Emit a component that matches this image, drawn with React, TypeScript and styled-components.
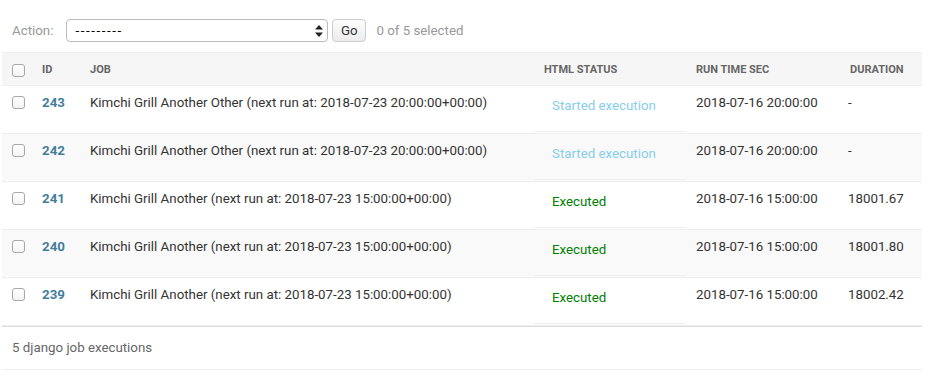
import React from "react";
import styled, { createGlobalStyle } from "styled-components";

const GlobalStyle = createGlobalStyle`
  html, body {
    margin: 0;
    padding: 0;
    background: #fff;
  }
  body {
    font-family: Roboto, "Liberation Sans", sans-serif;
    font-size: 13.3px;
    color: #333;
  }
`;

const ChangeList = styled.div`
  width: 920px;
  margin-left: 2px;
  padding-top: 8px;
`;

const Actions = styled.div`
  display: flex;
  align-items: center;
  height: 24px;
  padding: 10px;
  color: #999;
  font-size: 13.3px;
`;

const ActionLabel = styled.label`
  margin-right: 13px;
`;

const SelectWrap = styled.div`
  position: relative;
  width: 262px;
  height: 23px;
`;

const Select = styled.select`
  appearance: none;
  width: 100%;
  height: 100%;
  box-sizing: border-box;
  border: 1px solid #bbb;
  border-radius: 4px;
  background: #fff;
  padding: 0 24px 0 8px;
  font-family: Roboto, "Liberation Sans", sans-serif;
  font-size: 13.3px;
  letter-spacing: 1.6px;
  color: #000;
`;

const SelectArrows = styled.svg`
  position: absolute;
  right: 5px;
  top: 6px;
  pointer-events: none;
`;

const GoButton = styled.button`
  margin-left: 4px;
  width: 34px;
  height: 23px;
  border: 1px solid #ccc;
  border-radius: 4px;
  background: linear-gradient(#fdfdfd, #ececec);
  font-family: Roboto, "Liberation Sans", sans-serif;
  font-size: 13.3px;
  color: #333;
  padding: 0;
`;

const Counter = styled.span`
  margin-left: 10px;
  color: #999;
`;

const Table = styled.table`
  width: 920px;
  border-collapse: collapse;
  table-layout: fixed;
`;

const HeadCell = styled.th`
  background: #f6f6f6;
  border-top: 1px solid #eee;
  border-bottom: 1px solid #eee;
  padding: 9px 8px 7px;
  line-height: 16px;
  height: 16px;
  font-size: 11px;
  font-weight: 700;
  text-transform: uppercase;
  color: #666;
  text-align: left;
  vertical-align: middle;
  white-space: nowrap;
  &:first-child {
    padding-left: 10px;
  }
`;

const Row = styled.tr<{ $alt: boolean }>`
  background: ${(p) => (p.$alt ? "#f9f9f9" : "#fff")};
`;

const Cell = styled.td<{ $tight?: boolean }>`
  padding: 9px ${(p) => (p.$tight ? "10px" : "8px")} 7px
    ${(p) => (p.$tight ? "6px" : "8px")};
  line-height: 16px;
  font-size: 13.3px;
  color: #333;
  vertical-align: top;
  border-bottom: 1px solid #eee;
  white-space: nowrap;
  &:first-child {
    padding-left: 10px;
  }
`;

const StatusCell = styled.td`
  padding: 0;
  vertical-align: top;
  border-bottom: 1px solid #eee;
`;

const StatusBox = styled.div`
  margin: 0 2px 1px -2px;
  padding: 12px 8px 17px 18px;
  line-height: 16px;
  border-bottom: 1px solid #eee;
`;

const Status = styled.span<{ $done: boolean }>`
  color: ${(p) => (p.$done ? "#008000" : "#87ceeb")};
  font-size: 13.3px;
`;

const Check = styled.input`
  appearance: none;
  display: block;
  margin: 1px 0 0;
  width: 13px;
  height: 13px;
  box-sizing: border-box;
  border: 1px solid #a8a8a8;
  border-radius: 3px;
  background: linear-gradient(#fff, #f3f3f3);
`;

const IdLink = styled.a`
  color: #447e9b;
  font-weight: 700;
  text-decoration: none;
`;

const Paginator = styled.p`
  margin: 0;
  padding: 10px 10px 10px;
  line-height: 22px;
  font-size: 13.3px;
  color: #666;
  border-top: 1px solid #ddd;
  border-bottom: 1px solid #eee;
`;

type Execution = {
  id: number;
  job: string;
  done: boolean;
  runTime: string;
  duration: string;
};

const rows: Execution[] = [
  { id: 243, job: "Kimchi Grill Another Other (next run at: 2018-07-23 20:00:00+00:00)", done: false, runTime: "2018-07-16 20:00:00", duration: "-" },
  { id: 242, job: "Kimchi Grill Another Other (next run at: 2018-07-23 20:00:00+00:00)", done: false, runTime: "2018-07-16 20:00:00", duration: "-" },
  { id: 241, job: "Kimchi Grill Another (next run at: 2018-07-23 15:00:00+00:00)", done: true, runTime: "2018-07-16 15:00:00", duration: "18001.67" },
  { id: 240, job: "Kimchi Grill Another (next run at: 2018-07-23 15:00:00+00:00)", done: true, runTime: "2018-07-16 15:00:00", duration: "18001.80" },
  { id: 239, job: "Kimchi Grill Another (next run at: 2018-07-23 15:00:00+00:00)", done: true, runTime: "2018-07-16 15:00:00", duration: "18002.42" },
];

const App: React.FC = () => {
  return (
    <>
      <GlobalStyle />
      <ChangeList>
        <Actions>
          <ActionLabel>Action:</ActionLabel>
          <SelectWrap>
            <Select defaultValue="">
              <option value="">---------</option>
              <option value="delete">Delete selected django job executions</option>
            </Select>
            <SelectArrows width="8" height="12" viewBox="0 0 8 12">
              <path d="M4 0 L8 4.5 L0 4.5 Z M4 12 L8 7.5 L0 7.5 Z" fill="#222" />
            </SelectArrows>
          </SelectWrap>
          <GoButton>Go</GoButton>
          <Counter>0 of 5 selected</Counter>
        </Actions>
        <Table>
          <colgroup>
            <col style={{ width: 32 }} />
            <col style={{ width: 48 }} />
            <col style={{ width: 454 }} />
            <col style={{ width: 152 }} />
            <col style={{ width: 154 }} />
            <col style={{ width: 80 }} />
          </colgroup>
          <thead>
            <tr>
              <HeadCell><Check type="checkbox" /></HeadCell>
              <HeadCell>ID</HeadCell>
              <HeadCell>Job</HeadCell>
              <HeadCell>Html status</HeadCell>
              <HeadCell>Run time sec</HeadCell>
              <HeadCell>Duration</HeadCell>
            </tr>
          </thead>
          <tbody>
            {rows.map((r, i) => (
              <Row key={r.id} $alt={i % 2 === 1}>
                <Cell><Check type="checkbox" /></Cell>
                <Cell><IdLink href="#">{r.id}</IdLink></Cell>
                <Cell>{r.job}</Cell>
                <StatusCell>
                  <StatusBox>
                    <Status $done={r.done}>{r.done ? "Executed" : "Started execution"}</Status>
                  </StatusBox>
                </StatusCell>
                <Cell>{r.runTime}</Cell>
                <Cell $tight>{r.duration}</Cell>
              </Row>
            ))}
          </tbody>
        </Table>
        <Paginator>5 django job executions</Paginator>
      </ChangeList>
    </>
  );
};

export default App;
